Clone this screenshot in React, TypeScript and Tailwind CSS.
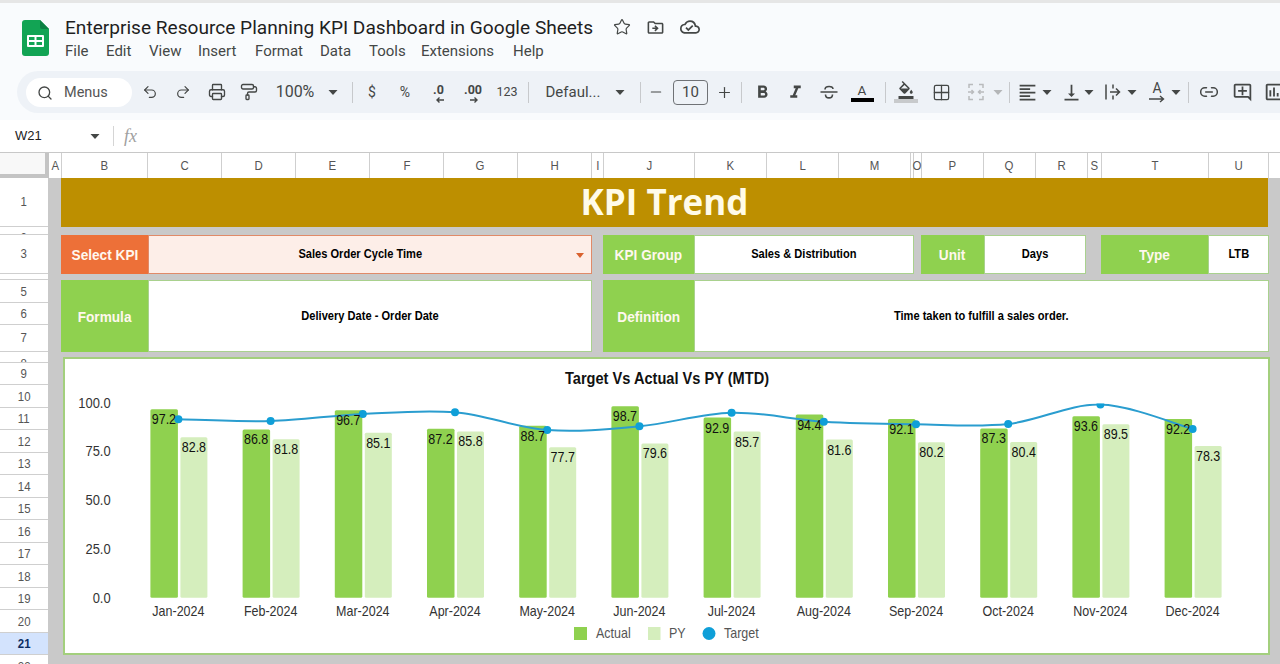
import type { ReactNode } from "react";
import { Grid2x2, Link2, Minus, PaintRoller, Plus, Printer, Redo2, Search, Star, Undo2 } from "lucide-react";
import {
  MdFormatAlignLeft,
  MdFormatBold,
  MdFormatItalic,
  MdOutlineAddComment,
  MdOutlineCloudDone,
  MdOutlineDriveFileMove,
  MdOutlineFormatColorFill,
  MdOutlineInsertChart,
  MdVerticalAlignBottom,
} from "react-icons/md";

const months = ["Jan", "Feb", "Mar", "Apr", "May", "Jun", "Jul", "Aug", "Sep", "Oct", "Nov", "Dec"];
const actual = [97.2, 86.8, 96.7, 87.2, 88.7, 98.7, 92.9, 94.4, 92.1, 87.3, 93.6, 92.2];
const py = [82.8, 81.8, 85.1, 85.8, 77.7, 79.6, 85.7, 81.6, 80.2, 80.4, 89.5, 78.3];
const targetY = [419.3, 421, 414, 412.3, 430, 426.3, 412.7, 421.7, 424.3, 424, 404.6, 429];

const BASE = 597.7;
const UNIT = 1.95;
const centerX = (i: number) => 178.4 + 92.2 * i;
const topY = (v: number) => BASE - v * UNIT;

const columns = [
  { label: "A", w: "w-[13px]" },
  { label: "B", w: "w-[86px]" },
  { label: "C", w: "w-[74px]" },
  { label: "D", w: "w-[74px]" },
  { label: "E", w: "w-[74px]" },
  { label: "F", w: "w-[74px]" },
  { label: "G", w: "w-[74px]" },
  { label: "H", w: "w-[74px]" },
  { label: "I", w: "w-[12px]" },
  { label: "J", w: "w-[90.5px]" },
  { label: "K", w: "w-[72.5px]" },
  { label: "L", w: "w-[72px]" },
  { label: "M", w: "w-[72px]" },
  { label: "", w: "w-[3px]" },
  { label: "O", w: "w-[8px]" },
  { label: "P", w: "w-[62px]" },
  { label: "Q", w: "w-[52px]" },
  { label: "R", w: "w-[52px]" },
  { label: "S", w: "w-[14px]" },
  { label: "T", w: "w-[107px]" },
  { label: "U", w: "w-[60px]" },
];

// rows 2, 4 and 8 are so short that only the top of the number shows
const rows = [
  { label: "1", h: "h-[48.5px] items-center" },
  { label: "2", h: "h-[8.5px] items-start pt-[4px]" },
  { label: "3", h: "h-[39px] items-center" },
  { label: "4", h: "h-[6px] items-start pt-[4px]" },
  { label: "5", h: "h-[22.5px] items-center pt-[2px]" },
  { label: "6", h: "h-[22.5px] items-center pt-[2px]" },
  { label: "7", h: "h-[27px] items-center" },
  { label: "8", h: "h-[10.5px] items-start pt-[5px]" },
  ...[9, 10, 11, 12, 13, 14, 15, 16, 17, 18, 19, 20, 21, 22].map((n) => ({ label: String(n), h: "h-[22.5px] items-center pt-[2px]" })),
];

const menus = [
  { label: "File", w: "w-[41px]" },
  { label: "Edit", w: "w-[43px]" },
  { label: "View", w: "w-[49px]" },
  { label: "Insert", w: "w-[57px]" },
  { label: "Format", w: "w-[65px]" },
  { label: "Data", w: "w-[49px]" },
  { label: "Tools", w: "w-[52px]" },
  { label: "Extensions", w: "w-[92px]" },
  { label: "Help", w: "w-[40px]" },
];

// catmull-rom through the target points, the chart's smoothed line
function smoothPath() {
  const pts = targetY.map((y, i) => [centerX(i), y]);
  let d = `M${pts[0][0]} ${pts[0][1]}`;
  for (let i = 0; i < pts.length - 1; i++) {
    const p0 = pts[Math.max(i - 1, 0)];
    const p1 = pts[i];
    const p2 = pts[i + 1];
    const p3 = pts[Math.min(i + 2, pts.length - 1)];
    const c1x = p1[0] + (p2[0] - p0[0]) / 6;
    const c1y = p1[1] + (p2[1] - p0[1]) / 6;
    const c2x = p2[0] - (p3[0] - p1[0]) / 6;
    const c2y = p2[1] - (p3[1] - p1[1]) / 6;
    d += ` C${c1x} ${c1y} ${c2x} ${c2y} ${p2[0]} ${p2[1]}`;
  }
  return d;
}

const Slot = ({ className, children }: { className: string; children?: ReactNode }) => (
  <div className={`flex h-full shrink-0 items-center justify-center whitespace-nowrap ${className}`}>{children}</div>
);

const Sep = ({ className }: { className: string }) => <div className={`h-[21px] w-px shrink-0 bg-[#c7c9cc] ${className}`} />;

const Caret = ({ muted }: { muted?: boolean }) => (
  <svg width="10" height="5" viewBox="0 0 10 5">
    <path d="M0.5 0h9L5 5z" fill={muted ? "#b4b6b8" : "#444746"} />
  </svg>
);

const SheetsLogo = () => (
  <svg width="27" height="36" viewBox="0 0 27 36" className="shrink-0">
    <path d="M3 0H18L27 9V33a3 3 0 0 1-3 3H3a3 3 0 0 1-3-3V3a3 3 0 0 1 3-3z" fill="#12a454" />
    <path d="M18 0L27 9H20a2 2 0 0 1-2-2z" fill="#0c8043" />
    <rect x="5" y="15" width="17" height="12" rx="1" fill="#fff" />
    <rect x="7" y="17" width="5.5" height="3" fill="#12a454" />
    <rect x="14.5" y="17" width="5.5" height="3" fill="#12a454" />
    <rect x="7" y="22" width="5.5" height="3" fill="#12a454" />
    <rect x="14.5" y="22" width="5.5" height="3" fill="#12a454" />
  </svg>
);

const MergeIcon = () => (
  <svg width="20" height="20" viewBox="0 0 20 20" fill="none" stroke="#b9bbbd" strokeWidth="1.5">
    <path d="M3 6V2.5H7M13 2.5H17V6M3 14V17.5H7M13 17.5H17V14" />
    <path d="M2 10H7M5.5 8L7.5 10L5.5 12M18 10H13M14.5 8L12.5 10L14.5 12" />
  </svg>
);

const WrapIcon = () => (
  <svg width="20" height="20" viewBox="0 0 20 20" fill="none" stroke="#444746" strokeWidth="1.5">
    <path d="M3 2.5V17.5M10 2.5V6.5M10 13.5V17.5M7 10H16M13 6.5L16.5 10L13 13.5" />
  </svg>
);

const StrikeIcon = () => (
  <svg width="20" height="20" viewBox="0 0 20 20" fill="none" stroke="#444746" strokeWidth="1.6">
    <path d="M1.5 10H18.5" />
    <path d="M6 7.5C6 3.5 14 3.5 14 7M6.5 12.5C6.5 17 13.5 17 13.5 12.5" />
  </svg>
);

const decIcon = (text: string, arrow: string) => (
  <div className="relative flex h-[24px] w-[26px] justify-center">
    <span className="text-[12.5px] leading-[20px] font-bold text-[#444746]">{text}</span>
    <svg width="10" height="8" viewBox="0 0 10 8" className="absolute top-[16px] left-[9px]" fill="none" stroke="#444746" strokeWidth="1.4">
      <path d={arrow} />
    </svg>
  </div>
);

const Label = ({ className, children }: { className: string; children: ReactNode }) => (
  <div className={`flex h-full shrink-0 items-center justify-center text-[#fff8ee] ${className}`}>
    <span className="scale-x-[0.88] text-[15.5px] font-bold whitespace-nowrap">{children}</span>
  </div>
);

const Value = ({ className, children }: { className: string; children: ReactNode }) => (
  <div className={`flex h-full shrink-0 items-center justify-center border border-[#a9d18e] bg-white text-black ${className}`}>
    <span className="scale-x-[0.88] text-[12.6px] font-bold whitespace-nowrap">{children}</span>
  </div>
);

// the reference's chart text is tall and narrow, so glyphs are squeezed in x
const ChartText = ({ x, y, anchor = "middle", size, weight, fill, children }: { x: number; y: number; anchor?: "middle" | "end" | "start"; size: number; weight?: number; fill: string; children: ReactNode }) => (
  <text transform={`translate(${x} ${y}) scale(0.88 1)`} textAnchor={anchor} fontSize={size} fontWeight={weight} fill={fill}>
    {children}
  </text>
);

function Chart() {
  return (
    <svg width="1203" height="294" viewBox="65 359 1203 294" className="block font-['Liberation_Sans',Arial,sans-serif]">
      <defs>
        <clipPath id="plot">
          <rect x="65" y="403.4" width="1203" height="200" />
        </clipPath>
      </defs>
      <ChartText x={667} y={384} size={16.6} weight={700} fill="#111">
        Target Vs Actual Vs PY (MTD)
      </ChartText>
      {[100, 75, 50, 25, 0].map((v) => (
        <ChartText key={v} x={110.6} y={topY(v) + 5} anchor="end" size={14.7} fill="#333">
          {v.toFixed(1)}
        </ChartText>
      ))}
      {months.map((m, i) => {
        const c = centerX(i);
        return (
          <g key={m}>
            <rect x={c - 28} y={topY(actual[i]) + 1} width="27.5" height={actual[i] * UNIT - 1} rx="1.5" fill="#8fd14f" />
            <rect x={c + 2} y={topY(py[i]) + 1} width="27" height={py[i] * UNIT - 1} rx="1.5" fill="#d5eebd" />
            <ChartText x={c} y={615.5} size={14.2} fill="#333">
              {m}-2024
            </ChartText>
          </g>
        );
      })}
      <g clipPath="url(#plot)">
        <path d={smoothPath()} fill="none" stroke="#2a9dcf" strokeWidth="2" />
        {months.map((m, i) => (
          <circle key={m} cx={centerX(i)} cy={targetY[i]} r="4" fill="#0f9fd8" />
        ))}
      </g>
      {months.map((m, i) => (
        <g key={m}>
          <ChartText x={centerX(i) - 14.5} y={topY(actual[i]) + 16} size={14.2} fill="#111">
            {actual[i].toFixed(1)}
          </ChartText>
          <ChartText x={centerX(i) + 15.5} y={topY(py[i]) + 16} size={14.2} fill="#111">
            {py[i].toFixed(1)}
          </ChartText>
        </g>
      ))}
      <rect x="574" y="627" width="13" height="13" fill="#8fd14f" />
      <ChartText x={596} y={638} anchor="start" size={14.2} fill="#555">
        Actual
      </ChartText>
      <rect x="648" y="627" width="12.5" height="13" fill="#d5eebd" />
      <ChartText x={669} y={638} anchor="start" size={14.2} fill="#555">
        PY
      </ChartText>
      <circle cx="709" cy="633.5" r="6.5" fill="#0f9fd8" />
      <ChartText x={724} y={638} anchor="start" size={14.2} fill="#555">
        Target
      </ChartText>
    </svg>
  );
}

export default function App() {
  return (
    <div className="h-[664px] w-[1280px] overflow-hidden bg-[#f9fbfd] font-['Liberation_Sans',Arial,sans-serif]">
      <div className="h-[3px] bg-[#e6e6e6]" />

      {/* title + menus */}
      <div className="flex h-[68px] items-start pt-[12px] pl-[22px]">
        <div className="mt-[5px]">
          <SheetsLogo />
        </div>
        <div className="ml-[16px] font-['Roboto',sans-serif]">
          <div className="flex h-[24px] items-center">
            <div className="w-[528px] pt-[2px] text-[19.1px] whitespace-nowrap text-[#1f1f1f]">Enterprise Resource Planning KPI Dashboard in Google Sheets</div>
            <Star size={18} strokeWidth={1.6} className="ml-[20px] text-[#444746]" />
            <MdOutlineDriveFileMove size={19} className="ml-[15px] text-[#444746]" />
            <MdOutlineCloudDone size={20} className="ml-[15px] text-[#444746]" />
          </div>
          <div className="flex h-[24px] items-center pt-[1px] text-[15px] text-[#444746]">
            {menus.map((m) => (
              <div key={m.label} className={m.w}>
                {m.label}
              </div>
            ))}
          </div>
        </div>
      </div>

      {/* toolbar */}
      <div className="ml-[17px] flex h-[42px] items-center overflow-hidden rounded-l-[21px] bg-[#eef2f7] pl-[9px] font-['Roboto',sans-serif] text-[#444746]">
        <div className="flex h-[29px] w-[106px] shrink-0 items-center rounded-full bg-white pt-[1px] pl-[11px] text-[14.5px] text-[#555]">
          <Search size={16} strokeWidth={2} className="text-[#444746]" />
          <span className="ml-[11px]">Menus</span>
        </div>
        <Slot className="ml-[2px] w-[32px]">
          <Undo2 size={16} strokeWidth={1.8} />
        </Slot>
        <Slot className="w-[34px]">
          <Redo2 size={16} strokeWidth={1.8} />
        </Slot>
        <Slot className="w-[33px]">
          <Printer size={18} strokeWidth={1.8} />
        </Slot>
        <Slot className="w-[32px]">
          <PaintRoller size={18} strokeWidth={1.8} />
        </Slot>
        <Slot className="w-[60px] text-[16px]">100%</Slot>
        <Slot className="w-[16px]">
          <Caret />
        </Slot>
        <Sep className="ml-[11px] mr-[3px]" />
        <Slot className="w-[32px] text-[14px]">$</Slot>
        <Slot className="w-[34px] text-[14px]">%</Slot>
        <Slot className="w-[33px]">{decIcon(".0", "M9 4H2M4.5 1.5L2 4L4.5 6.5")}</Slot>
        <Slot className="w-[36px]">{decIcon(".00", "M1 4H8M5.5 1.5L8 4L5.5 6.5")}</Slot>
        <Slot className="w-[32px] text-[12.5px]">123</Slot>
        <Sep className="ml-[5px]" />
        <Slot className="ml-[15px] w-[58px] text-[15px]">Defaul...</Slot>
        <Slot className="ml-[10px] w-[16px]">
          <Caret />
        </Slot>
        <Sep className="ml-[12px]" />
        <Slot className="ml-[5px] w-[20px]">
          <Minus size={16} strokeWidth={1.7} />
        </Slot>
        <div className="ml-[7px] flex h-[25px] w-[35px] shrink-0 items-center justify-center rounded-[4px] border border-[#6f7276] text-[15px]">10</div>
        <Slot className="ml-[6px] w-[20px]">
          <Plus size={17} strokeWidth={1.7} />
        </Slot>
        <Sep className="ml-[7px]" />
        <Slot className="ml-[3px] w-[34px]">
          <MdFormatBold size={21} />
        </Slot>
        <Slot className="w-[32px]">
          <MdFormatItalic size={21} />
        </Slot>
        <Slot className="w-[36px]">
          <StrikeIcon />
        </Slot>
        <Slot className="w-[30px]">
          <div className="flex w-[23px] flex-col items-center">
            <span className="text-[13.5px] leading-[15px]">A</span>
            <div className="h-[4px] w-[23px] bg-black" />
          </div>
        </Slot>
        <Sep className="ml-[8px]" />
        <Slot className="ml-[3px] w-[34px]">
          <div className="flex w-[24px] flex-col items-center">
            <MdOutlineFormatColorFill size={18} />
            <div className="h-[4px] w-[24px] bg-[#c8cacc]" />
          </div>
        </Slot>
        <Slot className="w-[36px]">
          <Grid2x2 size={19} strokeWidth={1.6} />
        </Slot>
        <Slot className="w-[34px]">
          <MergeIcon />
        </Slot>
        <Slot className="w-[10px]">
          <Caret muted />
        </Slot>
        <Sep className="ml-[6px]" />
        <Slot className="ml-[3px] w-[28px]">
          <MdFormatAlignLeft size={21} />
        </Slot>
        <Slot className="w-[12px]">
          <Caret />
        </Slot>
        <Slot className="ml-[5px] w-[26px]">
          <MdVerticalAlignBottom size={21} />
        </Slot>
        <Slot className="w-[10px]">
          <Caret />
        </Slot>
        <Slot className="ml-[7px] w-[24px]">
          <WrapIcon />
        </Slot>
        <Slot className="w-[14px]">
          <Caret />
        </Slot>
        <Slot className="ml-[5px] w-[26px]">
          <div className="relative flex h-[24px] w-[20px] justify-center">
            <span className="text-[14px] leading-[16px]">A</span>
            <svg width="20" height="8" viewBox="0 0 20 8" fill="none" stroke="#444746" strokeWidth="1.4" className="absolute top-[15px] left-0">
              <path d="M2 4H16M13 1L16.5 4L13 7" />
            </svg>
          </div>
        </Slot>
        <Slot className="w-[12px]">
          <Caret />
        </Slot>
        <Sep className="ml-[6px]" />
        <Slot className="ml-[3px] w-[34px]">
          <Link2 size={20} strokeWidth={1.8} />
        </Slot>
        <Slot className="w-[32px]">
          <MdOutlineAddComment size={21} />
        </Slot>
        <Slot className="w-[32px]">
          <MdOutlineInsertChart size={22} />
        </Slot>
      </div>

      {/* name box + formula bar */}
      <div className="mt-[7px] flex h-[32px] items-center bg-white text-[#444746]">
        <div className="ml-[15px] w-[72px] text-[13px] text-[#222]">W21</div>
        <Slot className="w-[16px]">
          <Caret />
        </Slot>
        <div className="ml-[10px] h-[20px] w-px bg-[#d5d5d5]" />
        <span className="ml-[10px] font-['Liberation_Serif',serif] text-[18px] text-[#a0a0a0] italic">fx</span>
      </div>

      {/* column headers */}
      <div className="flex h-[26px] border-t border-[#c8c8c8] bg-white text-[#555]">
        <div className="h-full w-[49px] shrink-0 border-r-[4px] border-b-[4px] border-[#c4c4c4] bg-[#f8f8f8]" />
        {columns.map((c, i) => (
          <div key={i} className={`flex h-full shrink-0 items-center justify-center border-r border-[#cfcfcf] ${c.w}`}>
            <span className="scale-x-[0.88] text-[13px]">{c.label}</span>
          </div>
        ))}
      </div>

      <div className="flex h-[486px]">
        {/* row headers */}
        <div className="w-[48px] shrink-0 overflow-hidden bg-white text-[#555]">
          {rows.map((r) => (
            <div
              key={r.label}
              className={`flex justify-center overflow-hidden border-b border-[#cfcfcf] ${r.h} ${r.label === "21" ? "bg-[#d3e3fd] font-bold text-[#0b2d63]" : ""}`}
            >
              <span className="scale-x-[0.88] text-[13px] leading-[14px]">{r.label}</span>
            </div>
          ))}
        </div>

        {/* sheet */}
        <div className="flex-1 bg-[#c9c9c9] pl-[13px]">
          <div className="flex h-[48.5px] w-[1207px] items-center justify-center bg-[#bd8f00] font-['Open_Sans',sans-serif] text-[35px] font-bold text-[#fffbe8]">
            KPI Trend
          </div>

          <div className="mt-[8.5px] flex h-[39px]">
            <Label className="w-[87px] bg-[#ed7038] pt-[1px]">Select KPI</Label>
            <div className="relative flex h-full w-[444px] shrink-0 items-center justify-center border border-[#e08a68] bg-[#fdeee8] pr-[20px] text-black">
              <span className="scale-x-[0.88] text-[12.6px] font-bold whitespace-nowrap">Sales Order Cycle Time</span>
              <svg width="8" height="5" viewBox="0 0 8 5" className="absolute top-[17px] right-[7px]">
                <path d="M0 0h8L4 5z" fill="#d9622f" />
              </svg>
            </div>
            <Label className="ml-[11px] w-[91px] bg-[#8fd14f] pt-[1px]">KPI Group</Label>
            <Value className="w-[220px]">Sales &amp; Distribution</Value>
            <Label className="ml-[7px] w-[63px] bg-[#8fd14f] pt-[1px]">Unit</Label>
            <Value className="w-[102px]">Days</Value>
            <Label className="ml-[15px] w-[107px] bg-[#8fd14f] pt-[1px]">Type</Label>
            <Value className="w-[61px]">LTB</Value>
          </div>

          <div className="mt-[6px] flex h-[72px]">
            <Label className="w-[87px] bg-[#8fd14f] pt-[2px]">Formula</Label>
            <Value className="w-[444px] pt-[1px]">Delivery Date - Order Date</Value>
            <Label className="ml-[11px] w-[91px] bg-[#8fd14f] pt-[2px]">Definition</Label>
            <Value className="w-[575px] pt-[1px]">Time taken to fulfill a sales order.</Value>
          </div>

          <div className="mt-[5px] ml-[2px] h-[298px] w-[1207px] border-2 border-[#a3cf7d] bg-white">
            <Chart />
          </div>
        </div>
      </div>
    </div>
  );
}
